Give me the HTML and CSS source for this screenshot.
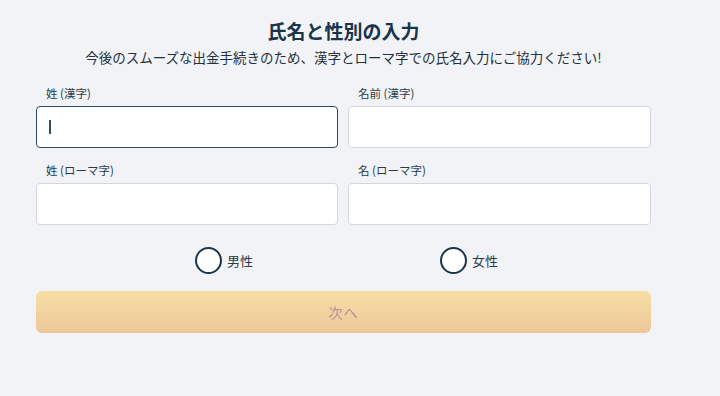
FILE: index.html
```html
<!DOCTYPE html>
<html lang="ja">
<head>
    <meta charset="UTF-8">
    <meta name="viewport" content="width=device-width, initial-scale=1.0">
    <title>氏名と性別の入力</title>
    <link rel="stylesheet" href="styles.css">
</head>
<body>
    <div class="container">
        <div class="header">
            <h1>氏名と性別の入力</h1>
            <p class="lead">今後のスムーズな出金手続きのため、漢字とローマ字での氏名入力にご協力ください!</p>
        </div>

        <form class="name-form">
            <div class="fields-grid">
                <div class="field">
                    <label>姓 (漢字)</label>
                    <div class="input focused"><span class="caret"></span></div>
                </div>
                <div class="field">
                    <label>名前 (漢字)</label>
                    <div class="input"></div>
                </div>
                <div class="field">
                    <label>姓 (ローマ字)</label>
                    <div class="input"></div>
                </div>
                <div class="field">
                    <label>名 (ローマ字)</label>
                    <div class="input"></div>
                </div>
            </div>

            <div class="gender-row">
                <div class="radio-item">
                    <span class="radio"></span>
                    <span class="radio-label">男性</span>
                </div>
                <div class="radio-item">
                    <span class="radio"></span>
                    <span class="radio-label">女性</span>
                </div>
            </div>

            <div class="next-btn">次へ</div>
        </form>
    </div>
</body>
</html>
```

FILE: styles.css
```css
* {
    margin: 0;
    padding: 0;
    box-sizing: border-box;
}

body {
    font-family: "Noto Sans CJK JP", "Noto Sans", sans-serif;
    color: #1c3347;
    background: #f1f3f7;
    min-height: 100vh;
}

.container {
    width: 615px;
    margin-left: 36px;
    padding-top: 18px;
}

.header {
    text-align: center;
}

.header h1 {
    font-size: 19px;
    font-weight: bold;
    line-height: 26px;
    color: #1a344a;
}

.header .lead {
    font-size: 13.5px;
    line-height: 20px;
    margin-top: 3px;
    color: #24303b;
}

.name-form {
    margin-top: 18px;
}

.fields-grid {
    display: grid;
    grid-template-columns: 302px 303px;
    column-gap: 10px;
    row-gap: 14px;
}

.field label {
    display: block;
    font-size: 11.5px;
    line-height: 16px;
    padding-left: 10px;
    margin-bottom: 5px;
    color: #2c3b48;
}

.input {
    height: 42px;
    background: #fff;
    border: 1px solid #d3d7dc;
    border-radius: 4px;
    display: flex;
    align-items: center;
    padding-left: 12px;
}

.input.focused {
    border: 1.5px solid #2d4a5e;
}

.caret {
    width: 1.5px;
    height: 14px;
    background: #3a4c5a;
}

.gender-row {
    display: flex;
    justify-content: center;
    gap: 187px;
    margin-top: 22px;
    padding-left: 6px;
}

.radio-item {
    display: flex;
    align-items: center;
    gap: 5px;
}

.radio {
    width: 27px;
    height: 27px;
    border: 2px solid #1b3447;
    border-radius: 50%;
    background: #fff;
}

.radio-label {
    font-size: 13px;
    color: #2c3b48;
}

.next-btn {
    margin-top: 17px;
    height: 42px;
    border-radius: 6px;
    background: linear-gradient(180deg, #f5dea3 0%, #eec79b 100%);
    color: #b3919c;
    font-size: 14px;
    display: flex;
    align-items: center;
    justify-content: center;
    letter-spacing: 1px;
}
```
